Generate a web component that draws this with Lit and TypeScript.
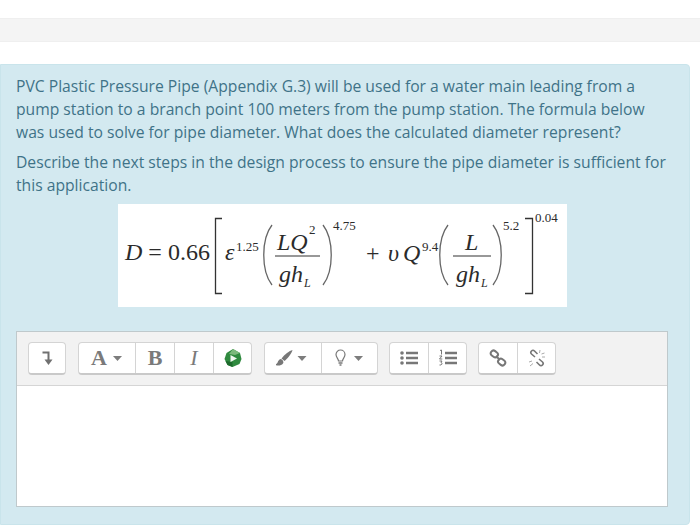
import { LitElement, html, css, svg } from "lit";
import { customElement } from "lit/decorators.js";

const I = (w: number, body: unknown) => html`<svg width=${w} height="18" viewBox="0 0 ${w} 18">${body}</svg>`;
const caret = (x: number) => svg`<path d="M${x} 7h9l-4.500 5z" fill="#7d7d7d"/>`;

@customElement("app-root")
export class AppRoot extends LitElement {
  static styles = css`
    :host { display: block; width: 700px; height: 526px; overflow: hidden; background: #fff; font-family: "Open Sans", sans-serif; }
    .topbar { margin-top: 18px; height: 24px; background: #f4f4f4; border-top: 1px solid #efefef; border-bottom: 1px solid #efefef; box-sizing: border-box; }
    .alert { margin-top: 22px; width: 690px; height: 461px; box-sizing: border-box; background: #d3e9f0; border: 1px solid #c9e4eb; border-radius: 0 4px 4px 0; padding: 10px 15px 0; color: #3f7388; font-size: 15.68px; line-height: 22.8px; }
    p { margin: 0 0 7.5px; white-space: nowrap; }
    .formula { position: relative; width: 449px; height: 103px; margin: 6px 0 24px 102px; background: #fff; color: #2b2b2b; font-family: "Liberation Serif", serif; line-height: 1; overflow: hidden; }
    .formula span { position: absolute; white-space: nowrap; }
    .formula span span { position: static; }
    .formula svg { position: absolute; left: 0; top: 0; }
    .m { font-size: 24px; }
    .i { font-style: italic; }
    .s { font-size: 13px; }
    .sub { font-size: 12px; font-style: italic; }
    .editor { width: 652px; height: 176px; box-sizing: border-box; border: 1px solid #bfc9cc; background: #fff; }
    .toolbar { height: 54px; box-sizing: border-box; background: #f2f2f2; border-bottom: 1px solid #d5d5d5; padding: 10px 11px; display: flex; gap: 12px; }
    .group { display: flex; height: 33px; box-sizing: border-box; background: #fff; border: 1px solid #d4d4d4; border-bottom: 2px solid #c9c9c9; border-radius: 4px; }
    .btn { display: flex; align-items: center; justify-content: center; gap: 5px; box-sizing: border-box; border-left: 1px solid #d4d4d4; color: #7a7a7a; font-family: "Liberation Serif", serif; font-weight: 700; font-size: 22px; }
    .btn:first-child { border-left: none; }
    .w36 { width: 36px; } .w38 { width: 38px; } .w39 { width: 39px; } .w56 { width: 56px; } .i2 { font-style: italic; font-weight: 400; }
    .tight { margin-left: -1px; }
    .a { gap: 6px; }
  `;

  render() {
    return html`
      <div class="topbar"></div>
      <div class="alert">
        <p>PVC Plastic Pressure Pipe (Appendix G.3) will be used for a water main leading from a<br>pump station to a branch point 100 meters from the pump station. The formula below<br>was used to solve for pipe diameter. What does the calculated diameter represent?</p>
        <p>Describe the next steps in the design process to ensure the pipe diameter is sufficient for<br>this application.</p>
        ${this.formula()}
        <div class="editor">
          <div class="toolbar">
            <div class="group"><div class="btn w36">${I(14, svg`<path d="M2.500 3.500h6v8" fill="none" stroke="#707070" stroke-width="2"/><path d="M4.500 10.500h8l-4 5.500z" fill="#707070"/>`)}</div></div>
            <div class="group">
              <div class="btn w56 a">A${I(10, caret(0))}</div>
              <div class="btn w39">B</div>
              <div class="btn w39 i2">I</div>
              <div class="btn w38">${I(20, svg`
                <path d="M10 0l7 4 1.500 6-2 5-7 3-5-2-3-6 2-6z" fill="#2f8a3f"/>
                <path d="M10 0l7 4-5 2-6-1z" fill="#7cb97c"/><path d="M2.500 12l2 4 5 2v-5z" fill="#1d6a2c"/>
                <path d="M7.500 6l6.500 3.500-6.500 3.500z" fill="#f1f7f1"/>`)}</div>
            </div>
            <div class="group">
              <div class="btn w56">${I(34, svg`
                <g transform="translate(-3.500 0)">
                <path d="M20 1c-3 1-8 4-11 8.500l3 2.500c3-2.500 7-7 8-11z" fill="#777"/>
                <path d="M8.500 10c-3 .5-3 3.500-4 4.500-.7.7-2 .7-3 .5 2 2 7 2.200 9-.5.8-1.200.5-3-2-4.500z" fill="#777"/></g>${caret(21.5)}`)}</div>
              <div class="btn w56">${I(30, svg`
                <g transform="translate(-3 0)">
                <path d="M6.500 12c0-2.500-2.500-3.500-2.500-6.500a4.500 4.500 0 0 1 9 0c0 3-2.500 4-2.500 6.500z" fill="none" stroke="#777" stroke-width="1.200"/>
                <path d="M6.500 14h4M7.500 16h2" stroke="#777" stroke-width="1.300"/></g>${caret(19)}`)}</div>
            </div>
            <div class="group tight">
              <div class="btn w38">${I(20, svg`
                <g fill="#777"><circle cx="3" cy="4" r="1.800"/><circle cx="3" cy="9" r="1.800"/><circle cx="3" cy="14" r="1.800"/></g>
                <path d="M7 4h12M7 9h12M7 14h12" stroke="#777" stroke-width="2.300"/>`)}</div>
              <div class="btn w38">${I(20, svg`
                <path d="M2 1.500l1.500-.5v4.500M1.500 7h2.500l-2.500 3h2.800M1.500 12h2.500l-1 1.500c1.500 0 1.500 3-1.500 2.500" fill="none" stroke="#777" stroke-width="1"/>
                <path d="M7 4h12M7 9h12M7 14h12" stroke="#777" stroke-width="2.300"/>`)}</div>
            </div>
            <div class="group tight">
              <div class="btn w38">${I(18, svg`
                <g fill="none" stroke="#777" stroke-width="2"><rect x="1.500" y="2" width="7.500" height="5.500" rx="2.700" transform="rotate(38 5 5)"/><rect x="9" y="10.500" width="7.500" height="5.500" rx="2.700" transform="rotate(38 13 13)"/><path d="M7 7l4 4"/></g>`)}</div>
              <div class="btn w38">${I(18, svg`
                <g fill="none" stroke="#777" stroke-width="1.600"><path d="M7 8L3.500 5a2 2 0 0 1 3-3l3 3"/><path d="M11 10l3.500 3a2 2 0 0 1-3 3l-3-3"/></g>
                <path d="M12 1l-.5 3M16.500 4l-3 1M17 8h-3M1 13l3-1M2 17l3-2.500" stroke="#aaa" stroke-width="1"/>`)}</div>
            </div>
          </div>
        </div>
      </div>
    `;
  }

  formula() {
    return html`<div class="formula">
      <svg width="449" height="103" viewBox="0 0 449 103" fill="none" stroke="#333">
        <path d="M104 14.500H97.500V89.500H104" stroke-width="1.300"/>
        <path d="M407 14.500H414.500V89.500H407" stroke-width="1.300"/>
        <path d="M157 52h45M335 52h38" stroke-width="1.200"/>
        <path d="M154 21C143 35 143 67 154 81M205 21C216 35 216 67 205 81" stroke="#666" stroke-width="1.300"/>
        <path d="M330 21C319 35 319 67 330 81M375 21C386 35 386 67 375 81" stroke="#666" stroke-width="1.300"/>
      </svg>
      <span class="m" style="left:7px;top:36px"><span class="i">D</span> = 0.66</span>
      <span class="m i" style="left:107px;top:36px">ε</span>
      <span class="s" style="left:118px;top:36px">1.25</span>
      <span class="m i" style="left:159px;top:26px">LQ</span>
      <span class="s" style="left:191px;top:19px">2</span>
      <span class="m i" style="left:161px;top:58px">gh</span>
      <span class="sub" style="left:186px;top:73px">L</span>
      <span class="s" style="left:215px;top:15px">4.75</span>
      <span class="m" style="left:248px;top:37px">+</span>
      <span class="m i" style="left:270px;top:37px">υ</span>
      <span class="m i" style="left:285px;top:37px">Q</span>
      <span class="s" style="left:304px;top:36px">9.4</span>
      <span class="m i" style="left:347px;top:26px">L</span>
      <span class="m i" style="left:338px;top:58px">gh</span>
      <span class="sub" style="left:363px;top:73px">L</span>
      <span class="s" style="left:385px;top:15px">5.2</span>
      <span class="s" style="left:417px;top:7px">0.04</span>
    </div>`;
  }
}
